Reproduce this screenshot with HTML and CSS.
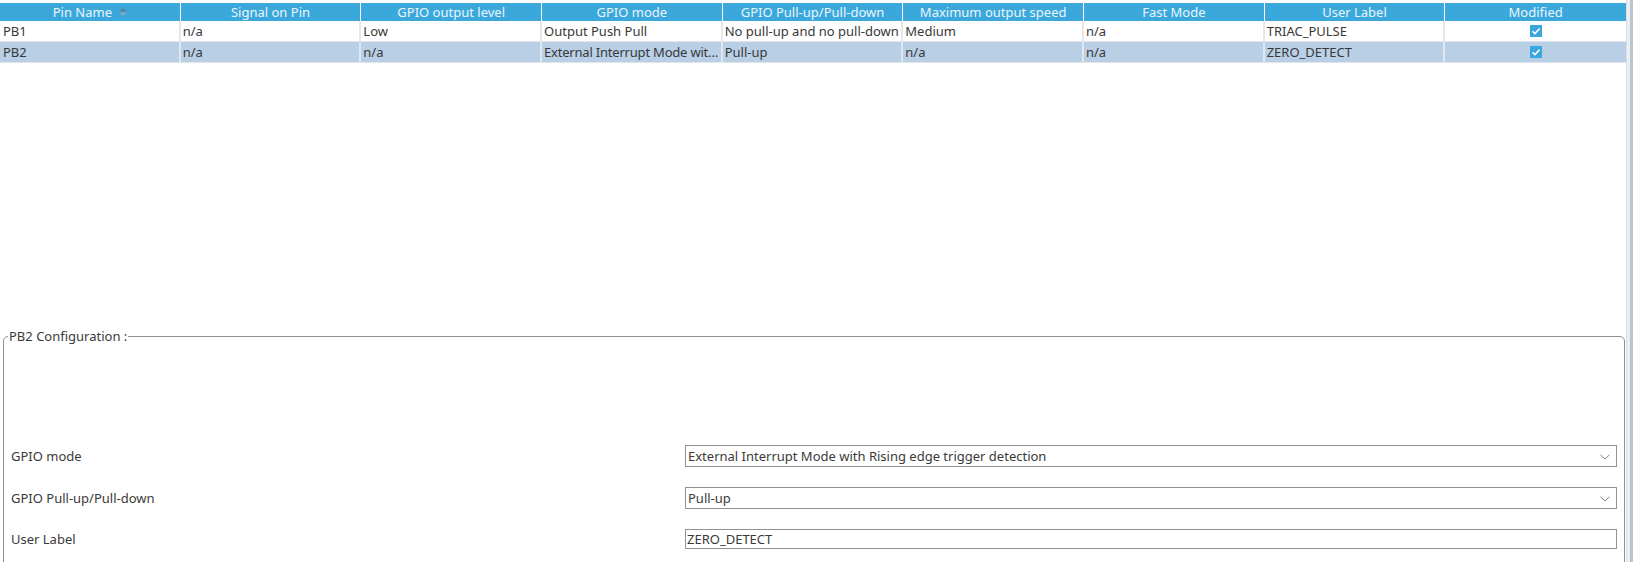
FILE: index.html
```html
<!DOCTYPE html>
<html lang="en">
<head>
<meta charset="utf-8">
<title>GPIO Configuration</title>
<link rel="stylesheet" href="styles.css">
</head>
<body>
<div class="app">
  <div class="main">
    <div class="table-area">
      <div class="grid head">
        <div class="hc">Pin Name<svg class="sort" width="8" height="8" viewBox="0 0 8 8"><polygon points="0,3.5 4,0 8,3.5" fill="#5f8193"/><polygon points="0,4.5 8,4.5 4,8" fill="#7aaed0"/></svg></div>
        <div class="hc">Signal on Pin</div>
        <div class="hc">GPIO output level</div>
        <div class="hc">GPIO mode</div>
        <div class="hc">GPIO Pull-up/Pull-down</div>
        <div class="hc">Maximum output speed</div>
        <div class="hc">Fast Mode</div>
        <div class="hc">User Label</div>
        <div class="hc">Modified</div>
      </div>
      <div class="grid row">
        <div class="c">PB1</div>
        <div class="c">n/a</div>
        <div class="c">Low</div>
        <div class="c">Output Push Pull</div>
        <div class="c">No pull-up and no pull-down</div>
        <div class="c">Medium</div>
        <div class="c">n/a</div>
        <div class="c">TRIAC_PULSE</div>
        <div class="c center"><span class="chk"><svg width="12" height="12" viewBox="0 0 12 12"><polyline points="2.5,6.2 5,8.6 9.6,3.4" fill="none" stroke="#fff" stroke-width="1.5"/></svg></span></div>
      </div>
      <div class="grid row selected">
        <div class="c">PB2</div>
        <div class="c">n/a</div>
        <div class="c">n/a</div>
        <div class="c trunc" title="External Interrupt Mode with Rising edge trigger detection">External Interrupt Mode wit…</div>
        <div class="c">Pull-up</div>
        <div class="c">n/a</div>
        <div class="c">n/a</div>
        <div class="c">ZERO_DETECT</div>
        <div class="c center"><span class="chk"><svg width="12" height="12" viewBox="0 0 12 12"><polyline points="2.5,6.2 5,8.6 9.6,3.4" fill="none" stroke="#fff" stroke-width="1.5"/></svg></span></div>
      </div>
    </div>
    <fieldset class="config">
      <legend>PB2 Configuration :</legend>
      <div class="form">
        <div class="lbl">GPIO mode</div>
        <div class="combo"><span>External Interrupt Mode with Rising edge trigger detection</span><svg width="10" height="6" viewBox="0 0 10 6"><polyline points="0.5,0.8 5,5 9.5,0.8" fill="none" stroke="#7d8084" stroke-width="1"/></svg></div>
        <div class="lbl">GPIO Pull-up/Pull-down</div>
        <div class="combo"><span>Pull-up</span><svg width="10" height="6" viewBox="0 0 10 6"><polyline points="0.5,0.8 5,5 9.5,0.8" fill="none" stroke="#7d8084" stroke-width="1"/></svg></div>
        <div class="lbl">User Label</div>
        <div class="textfield">ZERO_DETECT</div>
      </div>
    </fieldset>
  </div>
  <div class="vscroll"></div>
</div>
</body>
</html>
```
FILE: styles.css
```css
html, body {
  margin: 0;
  padding: 0;
  height: 562px;
  overflow: hidden;
  background: #ffffff;
}
body {
  font-family: "Noto Sans", "Open Sans", sans-serif;
  font-size: 13px;
  color: #383838;
}
.app {
  display: flex;
  height: 562px;
}
.main {
  flex: 1;
  min-width: 0;
  display: flex;
  flex-direction: column;
  overflow: hidden;
}
.vscroll {
  flex: none;
  width: 7px;
  background: linear-gradient(to right, #dcdfe2 0 1px, #eceef0 1px 4px, #b9c6d0 4px 7px);
}
.table-area {
  flex: none;
  height: 327px;
  padding-top: 3px;
  box-sizing: border-box;
}
.grid {
  display: grid;
  grid-template-columns: repeat(9, minmax(0, 1fr));
}
.head {
  height: 18px;
  background: #3aa8db;
  color: #eaf5fb;
}
.hc {
  display: flex;
  align-items: center;
  justify-content: center;
  gap: 7px;
  line-height: 18px;
  white-space: nowrap;
  overflow: hidden;
  border-right: 1px solid #ffffff;
}
.hc:last-child {
  border-right: 0;
}
.sort {
  flex: none;
}
.row {
  height: 21px;
  box-sizing: border-box;
  border-bottom: 1px solid #e2e5e8;
}
.row.selected {
  background: #b8cfe6;
}
.c {
  line-height: 20px;
  padding-left: 2px;
  border-right: 2px solid #e5e7ea;
  white-space: nowrap;
  overflow: hidden;
  text-overflow: ellipsis;
}
.c.trunc {
  letter-spacing: -0.2px;
  text-overflow: clip;
}
.c:first-child {
  padding-left: 3px;
}
.c:last-child {
  border-right: 0;
}
.row.selected .c {
  border-right-color: #dfe6ee;
}
.row.selected .c:last-child {
  border-right: 0;
}
.c.center {
  display: flex;
  align-items: center;
  justify-content: center;
  padding-left: 0;
}
.chk {
  display: block;
  width: 12px;
  height: 12px;
  background: #3aa6db;
}
.chk svg {
  display: block;
}
.config {
  flex: none;
  height: 300px;
  margin: 0 1px 0 3px;
  padding: 100px 0 0 0;
  border: 1px solid #8d9094;
  border-radius: 5px;
  min-width: 0;
  box-sizing: border-box;
}
.config legend {
  margin-left: 4px;
  padding: 0 1px;
  line-height: 18px;
  font-size: 13px;
  color: #3a3a3a;
}
.form {
  display: grid;
  grid-template-columns: 674px 1fr;
  row-gap: 20px;
  align-items: center;
  margin: 0 7px;
}
.lbl {
  color: #3a3a3a;
  line-height: 18px;
}
.combo {
  height: 22px;
  box-sizing: border-box;
  border: 1px solid #8f9296;
  display: flex;
  align-items: center;
  justify-content: space-between;
  padding: 0 6px 0 2px;
  color: #3a3a3a;
}
.combo svg {
  flex: none;
  margin-top: 1px;
}
.textfield {
  height: 20px;
  box-sizing: border-box;
  border: 1px solid #8f9296;
  padding-left: 1px;
  line-height: 18px;
  color: #3a3a3a;
}
```
